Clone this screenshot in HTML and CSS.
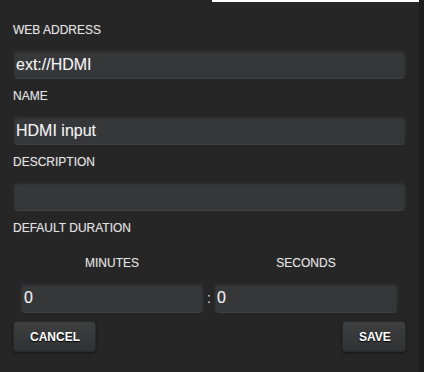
FILE: index.html
```html
<!DOCTYPE html>
<html>
<head>
<meta charset="utf-8">
<link rel="stylesheet" href="styles.css">
</head>
<body>
<div class="screen">
  <div class="panel">
    <div class="topline"></div>
    <form class="form">
      <label class="field-label">WEB ADDRESS</label>
      <input class="text-input" type="text" value="ext://HDMI">
      <label class="field-label">NAME</label>
      <input class="text-input" type="text" value="HDMI input">
      <label class="field-label">DESCRIPTION</label>
      <input class="text-input" type="text" value="">
      <label class="field-label">DEFAULT DURATION</label>
      <div class="duration">
        <div class="dur-col">
          <div class="dur-label">MINUTES</div>
          <input class="text-input dur-input" type="text" value="0">
        </div>
        <div class="dur-sep">:</div>
        <div class="dur-col">
          <div class="dur-label">SECONDS</div>
          <input class="text-input dur-input sec" type="text" value="0">
        </div>
      </div>
      <div class="actions">
        <button type="button" class="btn btn-cancel">CANCEL</button>
        <button type="button" class="btn btn-save">SAVE</button>
      </div>
    </form>
  </div>
  <div class="edge"></div>
</div>
</body>
</html>
```

FILE: styles.css
```css
html, body {
  margin: 0;
  padding: 0;
  background: #262626;
}
body {
  font-family: "Liberation Sans", Arial, sans-serif;
  width: 424px;
  height: 372px;
  overflow: hidden;
}
.screen {
  display: flex;
  height: 372px;
}
.panel {
  flex: 1;
  background: #262626;
}
.edge {
  width: 5px;
  background: #1d1d1d;
}
.topline {
  margin-left: 212px;
  height: 2px;
  background: #ffffff;
}
.form {
  display: flex;
  flex-direction: column;
  padding: 21px 13px 0 13px;
}
.field-label {
  display: block;
  font-size: 12px;
  line-height: 14px;
  color: #e2e2e2;
  text-shadow: 0 0 1px rgba(230,230,230,0.35);
  margin-bottom: 13px;
}
.text-input {
  box-sizing: border-box;
  width: 100%;
  height: 29px;
  margin: 0 0 10px 0;
  padding: 0 2px;
  font-family: "Liberation Sans", Arial, sans-serif;
  font-size: 16px;
  color: #f2f2f2;
  text-shadow: 0 0 1px rgba(240,240,240,0.3);
  background: #363739;
  border: 1px solid #2b2b2c;
  border-bottom-color: #3f4042;
  border-radius: 5px;
  box-shadow: inset 0 1px 2px rgba(0,0,0,0.25);
  outline: none;
}
.duration {
  display: grid;
  grid-template-columns: 184px 10px 184px;
  padding: 0 7px;
  margin-top: 8px;
}
.dur-col {
  display: flex;
  flex-direction: column;
  align-items: center;
}
.dur-label {
  font-size: 12px;
  line-height: 14px;
  color: #e2e2e2;
  text-shadow: 0 0 1px rgba(230,230,230,0.35);
  margin-bottom: 13px;
}
.dur-input {
  height: 30px;
  margin: 0;
  padding: 0 3px;
}
.dur-input.sec {
  padding: 0 2px;
}
.dur-sep {
  align-self: end;
  height: 30px;
  line-height: 30px;
  text-align: center;
  color: #e6e6e6;
  font-size: 14px;
}
.actions {
  display: flex;
  justify-content: space-between;
  margin-top: 8px;
}
.btn {
  height: 31px;
  padding: 0 16px;
  font-family: "Liberation Sans", Arial, sans-serif;
  font-size: 12px;
  font-weight: bold;
  color: #ffffff;
  text-shadow: 0 1px 1px #000;
  background: linear-gradient(#3e3f40, #303132);
  border: 1px solid #2a2a2a;
  border-radius: 4px;
  box-shadow: 0 1px 3px rgba(0,0,0,0.5);
}
.btn-cancel {
  width: 83px;
}
.btn-save {
  width: 64px;
}
```
